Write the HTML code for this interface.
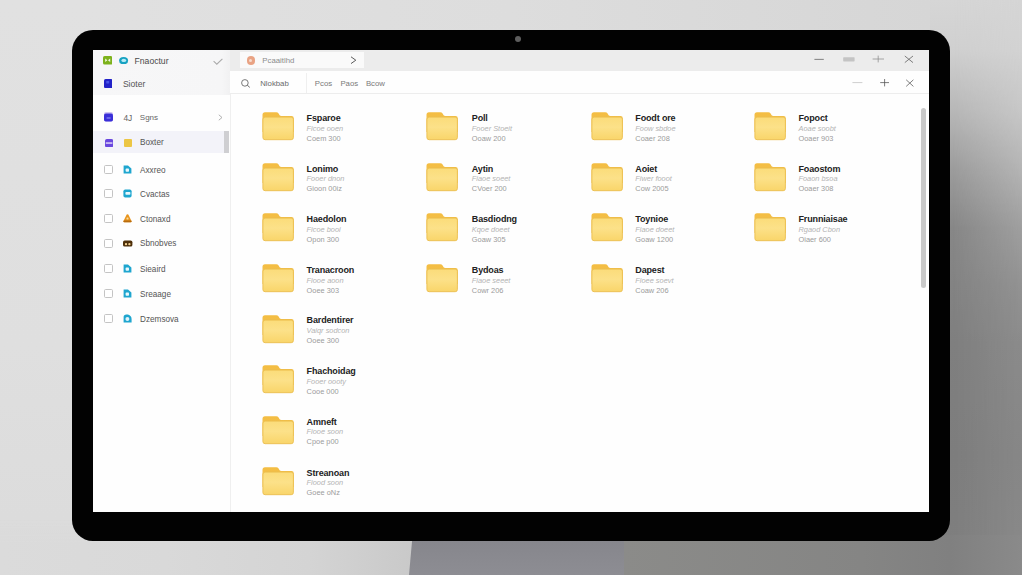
<!DOCTYPE html>
<html><head><meta charset="utf-8"><title>Files</title>
<style>
html,body{margin:0;padding:0}
body{width:1022px;height:575px;position:relative;overflow:hidden;background:#dcdcdc;font-family:"Liberation Sans",sans-serif;}
.abs,.fo,.nm,.s1,.s2,.cb,.si,.st{position:absolute}
#bg{left:0;top:0;width:1022px;height:575px;background:linear-gradient(90deg,#e1e1e1 0%,#dddddd 50%,#d6d6d6 91%,#d5d5d5 100%)}
#bgl{left:0;top:0;width:100px;height:575px;background:linear-gradient(180deg,#e1e1e1 0%,#dfdfdf 60%,#dbdbdb 100%)}
#bgr{left:930px;top:0;width:92px;height:575px;background:linear-gradient(180deg,#d6d6d6 0px,#d0d0d0 50px,#b6b6b6 114px,#9c9c9c 170px,#878787 228px,#7f7f7f 342px,#7d7d7d 456px,#7f7f7f 575px)}
#bgr2{left:930px;top:0;width:92px;height:575px;background:linear-gradient(180deg,#d5d5d5 0px,#d2d2d2 50px,#c6c6c6 114px,#b4b4b4 170px,#9f9f9f 228px,#929292 285px,#8b8b8b 342px,#878787 456px,#8a8a8a 575px);-webkit-mask-image:linear-gradient(90deg,rgba(0,0,0,0) 25%,rgba(0,0,0,1) 100%);mask-image:linear-gradient(90deg,rgba(0,0,0,0) 25%,rgba(0,0,0,1) 100%)}
#bgb{left:0;top:520px;width:413px;height:55px;background:linear-gradient(90deg,#dbdbdb 0%,#d9d9d9 40%,#d4d4d4 75%,#c9c9c9 100%);-webkit-mask-image:linear-gradient(180deg,rgba(0,0,0,0) 0,#000 22px);mask-image:linear-gradient(180deg,rgba(0,0,0,0) 0,#000 22px)}
#stand{left:409px;top:535px;width:215px;height:40px;background:linear-gradient(180deg,#85858b,#8d8d93);clip-path:polygon(3.6px 0,100% 0,100% 100%,0 100%)}
#bgbr{left:623px;top:535px;width:399px;height:40px;background:linear-gradient(90deg,#8b8b89,#858584 60%,#808080 82%,#8a8a8a)}
#bezel{left:72px;top:30px;width:878px;height:511px;border-radius:21px;background:#020202}
#cam{left:515.2px;top:36.2px;width:5.8px;height:5.8px;border-radius:3px;background:#5e5e5e}
#screen{left:93.2px;top:49.7px;width:836px;height:462px;background:#fefefe}
#tbar{left:93.2px;top:49.7px;width:836px;height:21.7px;background:#ececec}
#shead{left:93.2px;top:49.7px;width:137px;height:45px;background:linear-gradient(90deg,#f7f7f8 0%,#f6f6f7 94%,#f1f1f2 100%)}
#tab{left:240px;top:51.5px;width:124px;height:16.6px;background:#fafafa}
#tool{left:230.4px;top:71.6px;width:698.8px;height:21.7px;background:#fefefe;border-bottom:1px solid #ededed}
#sline{left:229.8px;top:94px;width:1px;height:418px;background:#efefef}
#sel{left:93.2px;top:130.6px;width:131px;height:22.6px;background:#f3f3f9}
#sthumb{left:223.8px;top:130.6px;width:5.6px;height:22.6px;background:#cfcfd2}
#scroll{left:921.2px;top:108px;width:5px;height:180px;border-radius:2.5px;background:#c9c9c9}
.t{position:absolute;white-space:nowrap;font-size:8px;line-height:12px;color:#555}
.nm{font-size:9px;line-height:11px;font-weight:bold;color:#222;white-space:nowrap;letter-spacing:-0.15px}
.s1{font-size:7.4px;line-height:10px;color:#b4b4b4;white-space:nowrap;font-style:italic}
.s2{font-size:7.4px;line-height:10px;color:#9c9c9c;white-space:nowrap}
.cb{left:104.4px;width:7px;height:7px;border:0.9px solid #c4c4c4;border-radius:1.6px;background:#fff}
.si{left:123px}
.st{left:140px;font-size:8.2px;line-height:12px;color:#555;white-space:nowrap}
</style></head><body>
<div class="abs" id="bg"></div>
<div class="abs" id="bgl"></div>
<div class="abs" id="bgr"></div>
<div class="abs" id="bgr2"></div>
<div class="abs" id="bgb"></div>
<div class="abs" id="bgbr"></div>
<div class="abs" id="stand"></div>
<div class="abs" id="bezel"></div>
<div class="abs" id="cam"></div>
<div class="abs" id="screen"></div>
<div class="abs" id="tbar"></div>
<div class="abs" id="shead"></div>
<div class="abs" id="tab"></div>
<div class="abs" id="tool"></div>
<div class="abs" id="sline"></div>
<div class="abs" id="sel"></div>
<div class="abs" id="sthumb"></div>
<div class="abs" id="scroll"></div>

<svg width="0" height="0" style="position:absolute"><defs>
<linearGradient id="gt" x1="0" y1="0" x2="0" y2="1"><stop offset="0" stop-color="#f4bd42"/><stop offset="1" stop-color="#f0c356"/></linearGradient>
<linearGradient id="gb" x1="0" y1="0" x2="0" y2="1"><stop offset="0" stop-color="#fbdc7a"/><stop offset="0.45" stop-color="#fce189"/><stop offset="1" stop-color="#f9d56a"/></linearGradient>
</defs></svg>

<!-- sidebar header -->
<svg class="abs" style="left:102.8px;top:56.2px" width="9.4" height="8.6" viewBox="0 0 9.4 8.6"><rect width="9.4" height="8.6" rx="1.6" fill="#7db21c"/><path d="M2.2 2.6 L4.4 4.3 L2.2 6 Z M7.2 2.6 L5 4.3 L7.2 6 Z" fill="#f2f8e4"/></svg>
<svg class="abs" style="left:119.4px;top:57px" width="9.2" height="7.4" viewBox="0 0 9.2 7.4"><ellipse cx="4.6" cy="3.7" rx="4.5" ry="3.6" fill="#17a2c2"/><ellipse cx="4.8" cy="3.4" rx="2.4" ry="1.7" fill="#b8ecf6"/></svg>
<div class="t" style="left:134.6px;top:54.6px;font-size:8.6px;color:#4a4a4a">Fnaoctur</div>
<svg class="abs" style="left:212.6px;top:57.6px" width="10" height="7" viewBox="0 0 10 7"><path d="M0.6 3.2 L3.8 6.2 L9.4 0.8" fill="none" stroke="#ababab" stroke-width="1.1"/></svg>
<svg class="abs" style="left:103.8px;top:79px" width="8.6" height="9.2" viewBox="0 0 8.6 9.2"><rect width="8.6" height="9.2" rx="1.6" fill="#2323c8"/><rect x="2.2" y="2" width="3" height="2.4" rx="0.6" fill="#4a55e6"/></svg>
<div class="t" style="left:122.9px;top:77.6px;font-size:8.6px;color:#555">Sioter</div>

<!-- row 3 -->
<svg class="abs" style="left:104.4px;top:112.2px" width="9" height="9.6" viewBox="0 0 9 9.6"><rect width="9" height="9.6" rx="1.8" fill="#d0c4f2"/><rect y="1.6" width="9" height="8" rx="1.8" fill="#3a2fd8"/><rect x="2.4" y="5.2" width="4.4" height="1.6" rx="0.8" fill="#7a78ee"/></svg>
<div class="t" style="left:123.4px;top:111.8px;font-size:8.4px;color:#666">4J</div>
<div class="t" style="left:139.8px;top:111.8px;font-size:8px;color:#666">Sgns</div>
<svg class="abs" style="left:218.4px;top:114.4px" width="5" height="7" viewBox="0 0 5 7"><path d="M0.8 0.8 L4 3.5 L0.8 6.2" fill="none" stroke="#a8a8a8" stroke-width="0.9"/></svg>

<!-- selected row -->
<svg class="abs" style="left:104.9px;top:139px" width="8.2" height="8.4" viewBox="0 0 8.2 8.4"><rect width="8.2" height="8.4" rx="1.8" fill="#6a48de"/><rect x="0.8" y="3.4" width="6.6" height="1.3" fill="#efeafc"/></svg>
<div class="abs" style="left:124px;top:138.8px;width:7.6px;height:8.2px;border-radius:1px;background:#ecc645"></div>
<div class="t" style="left:140px;top:137.2px;font-size:8.2px;color:#555">Boxter</div>

<div class="cb" style="top:165.0px"></div>
<svg class="si" style="top:164.8px" width="9" height="9" viewBox="0 0 9 9"><path d="M0.6 0.4 H5 L8.4 3.6 V8.6 H0.6 Z" fill="#1fa6cf"/><rect x="2.6" y="3.6" width="3.4" height="3.2" rx="0.8" fill="#e9f8fd"/></svg>
<div class="st" style="top:164.5px">Axxreo</div>
<div class="cb" style="top:189.1px"></div>
<svg class="si" style="top:188.9px" width="9" height="9" viewBox="0 0 9 9"><rect x="0.4" y="0.4" width="8.2" height="8.2" rx="1.8" fill="#1fa6cf"/><rect x="2.4" y="3" width="5" height="2.8" rx="0.8" fill="#e9f8fd"/></svg>
<div class="st" style="top:188.6px">Cvactas</div>
<div class="cb" style="top:214.2px"></div>
<svg class="si" style="top:214.0px" width="9" height="9" viewBox="0 0 9 9"><path d="M4.5 0.2 Q5.4 0.2 5.8 1.4 L8.6 7.2 Q8.8 8.2 7.6 8.2 H1.4 Q0.2 8.2 0.4 7.2 L3.2 1.4 Q3.6 0.2 4.5 0.2 Z" fill="#e8941c"/><path d="M0.8 6.4 H8.2 L8.6 7.2 Q8.8 8.2 7.6 8.2 H1.4 Q0.2 8.2 0.4 7.2 Z" fill="#b86c10"/><rect x="3.5" y="3.6" width="2" height="2" rx="0.5" fill="#f8d9a0"/></svg>
<div class="st" style="top:213.7px">Ctonaxd</div>
<div class="cb" style="top:238.7px"></div>
<svg class="si" style="top:238.5px;left:122.8px" width="10" height="9" viewBox="0 0 10 9"><rect x="0" y="1.6" width="9.4" height="6" rx="1.7" fill="#4e300a"/><circle cx="3" cy="5.2" r="1.15" fill="#f6d394"/><circle cx="6.4" cy="5.2" r="1.15" fill="#f6d394"/></svg>
<div class="st" style="top:238.2px">Sbnobves</div>
<div class="cb" style="top:264.4px"></div>
<svg class="si" style="top:264.2px" width="9" height="9" viewBox="0 0 9 9"><path d="M0.6 0.4 H5 L8.4 3.6 V8.6 H0.6 Z" fill="#1fa6cf"/><rect x="2.6" y="3.6" width="3.4" height="3.2" rx="0.8" fill="#e9f8fd"/></svg>
<div class="st" style="top:263.9px">Sieaird</div>
<div class="cb" style="top:289.0px"></div>
<svg class="si" style="top:288.8px" width="9" height="9" viewBox="0 0 9 9"><path d="M0.6 0.4 H5 L8.4 3.6 V8.6 H0.6 Z" fill="#1fa6cf"/><rect x="2.6" y="3.6" width="3.4" height="3.2" rx="0.8" fill="#e9f8fd"/></svg>
<div class="st" style="top:288.5px">Sreaage</div>
<div class="cb" style="top:314.4px"></div>
<svg class="si" style="top:314.2px" width="9" height="9" viewBox="0 0 9 9"><path d="M0.6 3 Q0.6 0.4 3.4 0.4 H5 Q8.6 1.6 8.6 5 V8.6 H0.6 Z" fill="#1fa6cf"/><circle cx="4.4" cy="5" r="2" fill="#dff4fb"/></svg>
<div class="st" style="top:313.9px">Dzemsova</div>

<!-- tab -->
<div class="abs" style="left:246.5px;top:56.4px;width:8.2px;height:8.2px;border-radius:4.1px;background:#e9a384"></div>
<div class="abs" style="left:248.7px;top:58.6px;width:3.8px;height:3.8px;border-radius:2px;background:#f7dccf"></div>
<div class="t" style="left:262.3px;top:54.8px;font-size:7.8px;color:#8c8c8c">Pcaaitlhd</div>
<svg class="abs" style="left:350.4px;top:56.4px" width="7" height="8.4" viewBox="0 0 7 8.4"><path d="M1 0.8 L5.8 4.2 L1 7.6" fill="none" stroke="#5a5a5a" stroke-width="1"/></svg>

<!-- toolbar -->
<svg class="abs" style="left:241px;top:79px" width="9.4" height="9" viewBox="0 0 9.4 9"><circle cx="3.9" cy="3.9" r="3.3" fill="none" stroke="#6a6a6a" stroke-width="0.9"/><path d="M6.3 6.2 L8.8 8.4" stroke="#6a6a6a" stroke-width="1"/></svg>
<div class="t" style="left:260.2px;top:77.9px;font-size:7.8px;color:#6a6a6a">Nlokbab</div>
<div class="abs" style="left:305.8px;top:73px;width:1px;height:20px;background:#efefef"></div>
<div class="t" style="left:314.8px;top:77.9px;font-size:7.8px;color:#7a7a7a">Pcos</div>
<div class="t" style="left:340.4px;top:77.9px;font-size:7.8px;color:#7a7a7a">Paos</div>
<div class="t" style="left:365.9px;top:77.9px;font-size:7.8px;color:#7a7a7a">Bcow</div>

<!-- window controls -->
<svg class="abs" style="left:810px;top:52px" width="110" height="40" viewBox="0 0 110 40">
<path d="M4.4 7.4 H13.8" stroke="#8a8a8a" stroke-width="1.1"/>
<rect x="33.2" y="5.2" width="11.4" height="4.2" rx="0.6" fill="#c4c4c4"/>
<path d="M62.6 7 H74 M68.2 3.6 V10.4" stroke="#8c8c8c" stroke-width="0.75"/>
<path d="M94.8 4 L103 10.6 M103 4 L94.8 10.6" stroke="#707070" stroke-width="0.9"/>
<path d="M42.4 30.6 H52.4" stroke="#cfcfcf" stroke-width="1"/>
<path d="M70.2 30.6 H79 M74.6 27 V34.4" stroke="#505050" stroke-width="0.75"/>
<path d="M96.2 27.8 L103.4 34.4 M103.4 27.8 L96.2 34.4" stroke="#707070" stroke-width="0.9"/>
</svg>

<svg class="fo" style="left:262.3px;top:112.2px" width="32" height="29" viewBox="0 0 32 29"><path d="M0.5 2.8 Q0.5 0.3 3 0.3 H14.2 Q15.8 0.3 16.6 1.6 L17.6 3.3 Q18.2 4.1 19.4 4.1 H29.5 Q31.8 4.1 31.8 6.4 V20 H0.5 Z" fill="url(#gt)"/><rect x="0.9" y="5.1" width="30.5" height="22.6" rx="2.2" fill="url(#gb)" stroke="#ebbd4e" stroke-width="0.9"/></svg>
<div class="nm" style="left:306.6px;top:113.0px">Fsparoe</div>
<div class="s1" style="left:306.6px;top:123.7px">Ficoe ooen</div>
<div class="s2" style="left:306.6px;top:133.7px">Coem 300</div>
<svg class="fo" style="left:262.3px;top:162.7px" width="32" height="29" viewBox="0 0 32 29"><path d="M0.5 2.8 Q0.5 0.3 3 0.3 H14.2 Q15.8 0.3 16.6 1.6 L17.6 3.3 Q18.2 4.1 19.4 4.1 H29.5 Q31.8 4.1 31.8 6.4 V20 H0.5 Z" fill="url(#gt)"/><rect x="0.9" y="5.1" width="30.5" height="22.6" rx="2.2" fill="url(#gb)" stroke="#ebbd4e" stroke-width="0.9"/></svg>
<div class="nm" style="left:306.6px;top:163.5px">Lonimo</div>
<div class="s1" style="left:306.6px;top:174.2px">Fooer dnon</div>
<div class="s2" style="left:306.6px;top:184.2px">Gioon 00iz</div>
<svg class="fo" style="left:262.3px;top:213.1px" width="32" height="29" viewBox="0 0 32 29"><path d="M0.5 2.8 Q0.5 0.3 3 0.3 H14.2 Q15.8 0.3 16.6 1.6 L17.6 3.3 Q18.2 4.1 19.4 4.1 H29.5 Q31.8 4.1 31.8 6.4 V20 H0.5 Z" fill="url(#gt)"/><rect x="0.9" y="5.1" width="30.5" height="22.6" rx="2.2" fill="url(#gb)" stroke="#ebbd4e" stroke-width="0.9"/></svg>
<div class="nm" style="left:306.6px;top:213.9px">Haedolon</div>
<div class="s1" style="left:306.6px;top:224.6px">Ficoe booi</div>
<div class="s2" style="left:306.6px;top:234.6px">Opon 300</div>
<svg class="fo" style="left:262.3px;top:264.0px" width="32" height="29" viewBox="0 0 32 29"><path d="M0.5 2.8 Q0.5 0.3 3 0.3 H14.2 Q15.8 0.3 16.6 1.6 L17.6 3.3 Q18.2 4.1 19.4 4.1 H29.5 Q31.8 4.1 31.8 6.4 V20 H0.5 Z" fill="url(#gt)"/><rect x="0.9" y="5.1" width="30.5" height="22.6" rx="2.2" fill="url(#gb)" stroke="#ebbd4e" stroke-width="0.9"/></svg>
<div class="nm" style="left:306.6px;top:264.8px">Tranacroon</div>
<div class="s1" style="left:306.6px;top:275.5px">Fiooe aoon</div>
<div class="s2" style="left:306.6px;top:285.5px">Ooee 303</div>
<svg class="fo" style="left:262.3px;top:314.5px" width="32" height="29" viewBox="0 0 32 29"><path d="M0.5 2.8 Q0.5 0.3 3 0.3 H14.2 Q15.8 0.3 16.6 1.6 L17.6 3.3 Q18.2 4.1 19.4 4.1 H29.5 Q31.8 4.1 31.8 6.4 V20 H0.5 Z" fill="url(#gt)"/><rect x="0.9" y="5.1" width="30.5" height="22.6" rx="2.2" fill="url(#gb)" stroke="#ebbd4e" stroke-width="0.9"/></svg>
<div class="nm" style="left:306.6px;top:315.3px">Bardentirer</div>
<div class="s1" style="left:306.6px;top:326.0px">Vaiqr sodcon</div>
<div class="s2" style="left:306.6px;top:336.0px">Ooee 300</div>
<svg class="fo" style="left:262.3px;top:365.0px" width="32" height="29" viewBox="0 0 32 29"><path d="M0.5 2.8 Q0.5 0.3 3 0.3 H14.2 Q15.8 0.3 16.6 1.6 L17.6 3.3 Q18.2 4.1 19.4 4.1 H29.5 Q31.8 4.1 31.8 6.4 V20 H0.5 Z" fill="url(#gt)"/><rect x="0.9" y="5.1" width="30.5" height="22.6" rx="2.2" fill="url(#gb)" stroke="#ebbd4e" stroke-width="0.9"/></svg>
<div class="nm" style="left:306.6px;top:365.8px">Fhachoidag</div>
<div class="s1" style="left:306.6px;top:376.5px">Fooer oooty</div>
<div class="s2" style="left:306.6px;top:386.5px">Cooe 000</div>
<svg class="fo" style="left:262.3px;top:415.9px" width="32" height="29" viewBox="0 0 32 29"><path d="M0.5 2.8 Q0.5 0.3 3 0.3 H14.2 Q15.8 0.3 16.6 1.6 L17.6 3.3 Q18.2 4.1 19.4 4.1 H29.5 Q31.8 4.1 31.8 6.4 V20 H0.5 Z" fill="url(#gt)"/><rect x="0.9" y="5.1" width="30.5" height="22.6" rx="2.2" fill="url(#gb)" stroke="#ebbd4e" stroke-width="0.9"/></svg>
<div class="nm" style="left:306.6px;top:416.7px">Amneft</div>
<div class="s1" style="left:306.6px;top:427.4px">Fiooe soon</div>
<div class="s2" style="left:306.6px;top:437.4px">Cpoe p00</div>
<svg class="fo" style="left:262.3px;top:466.9px" width="32" height="29" viewBox="0 0 32 29"><path d="M0.5 2.8 Q0.5 0.3 3 0.3 H14.2 Q15.8 0.3 16.6 1.6 L17.6 3.3 Q18.2 4.1 19.4 4.1 H29.5 Q31.8 4.1 31.8 6.4 V20 H0.5 Z" fill="url(#gt)"/><rect x="0.9" y="5.1" width="30.5" height="22.6" rx="2.2" fill="url(#gb)" stroke="#ebbd4e" stroke-width="0.9"/></svg>
<div class="nm" style="left:306.6px;top:467.7px">Streanoan</div>
<div class="s1" style="left:306.6px;top:478.4px">Fiood soon</div>
<div class="s2" style="left:306.6px;top:488.4px">Goee oNz</div>
<svg class="fo" style="left:426.4px;top:112.2px" width="32" height="29" viewBox="0 0 32 29"><path d="M0.5 2.8 Q0.5 0.3 3 0.3 H14.2 Q15.8 0.3 16.6 1.6 L17.6 3.3 Q18.2 4.1 19.4 4.1 H29.5 Q31.8 4.1 31.8 6.4 V20 H0.5 Z" fill="url(#gt)"/><rect x="0.9" y="5.1" width="30.5" height="22.6" rx="2.2" fill="url(#gb)" stroke="#ebbd4e" stroke-width="0.9"/></svg>
<div class="nm" style="left:471.8px;top:113.0px">Poll</div>
<div class="s1" style="left:471.8px;top:123.7px">Fooer Stoeit</div>
<div class="s2" style="left:471.8px;top:133.7px">Ooaw 200</div>
<svg class="fo" style="left:426.4px;top:162.7px" width="32" height="29" viewBox="0 0 32 29"><path d="M0.5 2.8 Q0.5 0.3 3 0.3 H14.2 Q15.8 0.3 16.6 1.6 L17.6 3.3 Q18.2 4.1 19.4 4.1 H29.5 Q31.8 4.1 31.8 6.4 V20 H0.5 Z" fill="url(#gt)"/><rect x="0.9" y="5.1" width="30.5" height="22.6" rx="2.2" fill="url(#gb)" stroke="#ebbd4e" stroke-width="0.9"/></svg>
<div class="nm" style="left:471.8px;top:163.5px">Aytin</div>
<div class="s1" style="left:471.8px;top:174.2px">Fiaoe soeet</div>
<div class="s2" style="left:471.8px;top:184.2px">CVoer 200</div>
<svg class="fo" style="left:426.4px;top:213.1px" width="32" height="29" viewBox="0 0 32 29"><path d="M0.5 2.8 Q0.5 0.3 3 0.3 H14.2 Q15.8 0.3 16.6 1.6 L17.6 3.3 Q18.2 4.1 19.4 4.1 H29.5 Q31.8 4.1 31.8 6.4 V20 H0.5 Z" fill="url(#gt)"/><rect x="0.9" y="5.1" width="30.5" height="22.6" rx="2.2" fill="url(#gb)" stroke="#ebbd4e" stroke-width="0.9"/></svg>
<div class="nm" style="left:471.8px;top:213.9px">Basdiodng</div>
<div class="s1" style="left:471.8px;top:224.6px">Kqoe doeet</div>
<div class="s2" style="left:471.8px;top:234.6px">Goaw 305</div>
<svg class="fo" style="left:426.4px;top:264.0px" width="32" height="29" viewBox="0 0 32 29"><path d="M0.5 2.8 Q0.5 0.3 3 0.3 H14.2 Q15.8 0.3 16.6 1.6 L17.6 3.3 Q18.2 4.1 19.4 4.1 H29.5 Q31.8 4.1 31.8 6.4 V20 H0.5 Z" fill="url(#gt)"/><rect x="0.9" y="5.1" width="30.5" height="22.6" rx="2.2" fill="url(#gb)" stroke="#ebbd4e" stroke-width="0.9"/></svg>
<div class="nm" style="left:471.8px;top:264.8px">Bydoas</div>
<div class="s1" style="left:471.8px;top:275.5px">Fiaoe seeet</div>
<div class="s2" style="left:471.8px;top:285.5px">Cowr 206</div>
<svg class="fo" style="left:590.6px;top:112.2px" width="32" height="29" viewBox="0 0 32 29"><path d="M0.5 2.8 Q0.5 0.3 3 0.3 H14.2 Q15.8 0.3 16.6 1.6 L17.6 3.3 Q18.2 4.1 19.4 4.1 H29.5 Q31.8 4.1 31.8 6.4 V20 H0.5 Z" fill="url(#gt)"/><rect x="0.9" y="5.1" width="30.5" height="22.6" rx="2.2" fill="url(#gb)" stroke="#ebbd4e" stroke-width="0.9"/></svg>
<div class="nm" style="left:635.3px;top:113.0px">Foodt ore</div>
<div class="s1" style="left:635.3px;top:123.7px">Foow sbdoe</div>
<div class="s2" style="left:635.3px;top:133.7px">Coaer 208</div>
<svg class="fo" style="left:590.6px;top:162.7px" width="32" height="29" viewBox="0 0 32 29"><path d="M0.5 2.8 Q0.5 0.3 3 0.3 H14.2 Q15.8 0.3 16.6 1.6 L17.6 3.3 Q18.2 4.1 19.4 4.1 H29.5 Q31.8 4.1 31.8 6.4 V20 H0.5 Z" fill="url(#gt)"/><rect x="0.9" y="5.1" width="30.5" height="22.6" rx="2.2" fill="url(#gb)" stroke="#ebbd4e" stroke-width="0.9"/></svg>
<div class="nm" style="left:635.3px;top:163.5px">Aoiet</div>
<div class="s1" style="left:635.3px;top:174.2px">Fiwer fooot</div>
<div class="s2" style="left:635.3px;top:184.2px">Cow 2005</div>
<svg class="fo" style="left:590.6px;top:213.1px" width="32" height="29" viewBox="0 0 32 29"><path d="M0.5 2.8 Q0.5 0.3 3 0.3 H14.2 Q15.8 0.3 16.6 1.6 L17.6 3.3 Q18.2 4.1 19.4 4.1 H29.5 Q31.8 4.1 31.8 6.4 V20 H0.5 Z" fill="url(#gt)"/><rect x="0.9" y="5.1" width="30.5" height="22.6" rx="2.2" fill="url(#gb)" stroke="#ebbd4e" stroke-width="0.9"/></svg>
<div class="nm" style="left:635.3px;top:213.9px">Toynioe</div>
<div class="s1" style="left:635.3px;top:224.6px">Fiaoe doeet</div>
<div class="s2" style="left:635.3px;top:234.6px">Goaw 1200</div>
<svg class="fo" style="left:590.6px;top:264.0px" width="32" height="29" viewBox="0 0 32 29"><path d="M0.5 2.8 Q0.5 0.3 3 0.3 H14.2 Q15.8 0.3 16.6 1.6 L17.6 3.3 Q18.2 4.1 19.4 4.1 H29.5 Q31.8 4.1 31.8 6.4 V20 H0.5 Z" fill="url(#gt)"/><rect x="0.9" y="5.1" width="30.5" height="22.6" rx="2.2" fill="url(#gb)" stroke="#ebbd4e" stroke-width="0.9"/></svg>
<div class="nm" style="left:635.3px;top:264.8px">Dapest</div>
<div class="s1" style="left:635.3px;top:275.5px">Fioee soevt</div>
<div class="s2" style="left:635.3px;top:285.5px">Coaw 206</div>
<svg class="fo" style="left:754.0px;top:112.2px" width="32" height="29" viewBox="0 0 32 29"><path d="M0.5 2.8 Q0.5 0.3 3 0.3 H14.2 Q15.8 0.3 16.6 1.6 L17.6 3.3 Q18.2 4.1 19.4 4.1 H29.5 Q31.8 4.1 31.8 6.4 V20 H0.5 Z" fill="url(#gt)"/><rect x="0.9" y="5.1" width="30.5" height="22.6" rx="2.2" fill="url(#gb)" stroke="#ebbd4e" stroke-width="0.9"/></svg>
<div class="nm" style="left:798.5px;top:113.0px">Fopoct</div>
<div class="s1" style="left:798.5px;top:123.7px">Aoae soobt</div>
<div class="s2" style="left:798.5px;top:133.7px">Ooaer 903</div>
<svg class="fo" style="left:754.0px;top:162.7px" width="32" height="29" viewBox="0 0 32 29"><path d="M0.5 2.8 Q0.5 0.3 3 0.3 H14.2 Q15.8 0.3 16.6 1.6 L17.6 3.3 Q18.2 4.1 19.4 4.1 H29.5 Q31.8 4.1 31.8 6.4 V20 H0.5 Z" fill="url(#gt)"/><rect x="0.9" y="5.1" width="30.5" height="22.6" rx="2.2" fill="url(#gb)" stroke="#ebbd4e" stroke-width="0.9"/></svg>
<div class="nm" style="left:798.5px;top:163.5px">Foaostom</div>
<div class="s1" style="left:798.5px;top:174.2px">Foaon bsoa</div>
<div class="s2" style="left:798.5px;top:184.2px">Ooaer 308</div>
<svg class="fo" style="left:754.0px;top:213.1px" width="32" height="29" viewBox="0 0 32 29"><path d="M0.5 2.8 Q0.5 0.3 3 0.3 H14.2 Q15.8 0.3 16.6 1.6 L17.6 3.3 Q18.2 4.1 19.4 4.1 H29.5 Q31.8 4.1 31.8 6.4 V20 H0.5 Z" fill="url(#gt)"/><rect x="0.9" y="5.1" width="30.5" height="22.6" rx="2.2" fill="url(#gb)" stroke="#ebbd4e" stroke-width="0.9"/></svg>
<div class="nm" style="left:798.5px;top:213.9px">Frunniaisae</div>
<div class="s1" style="left:798.5px;top:224.6px">Rgaod Cbon</div>
<div class="s2" style="left:798.5px;top:234.6px">Oiaer 600</div>
</body></html>
